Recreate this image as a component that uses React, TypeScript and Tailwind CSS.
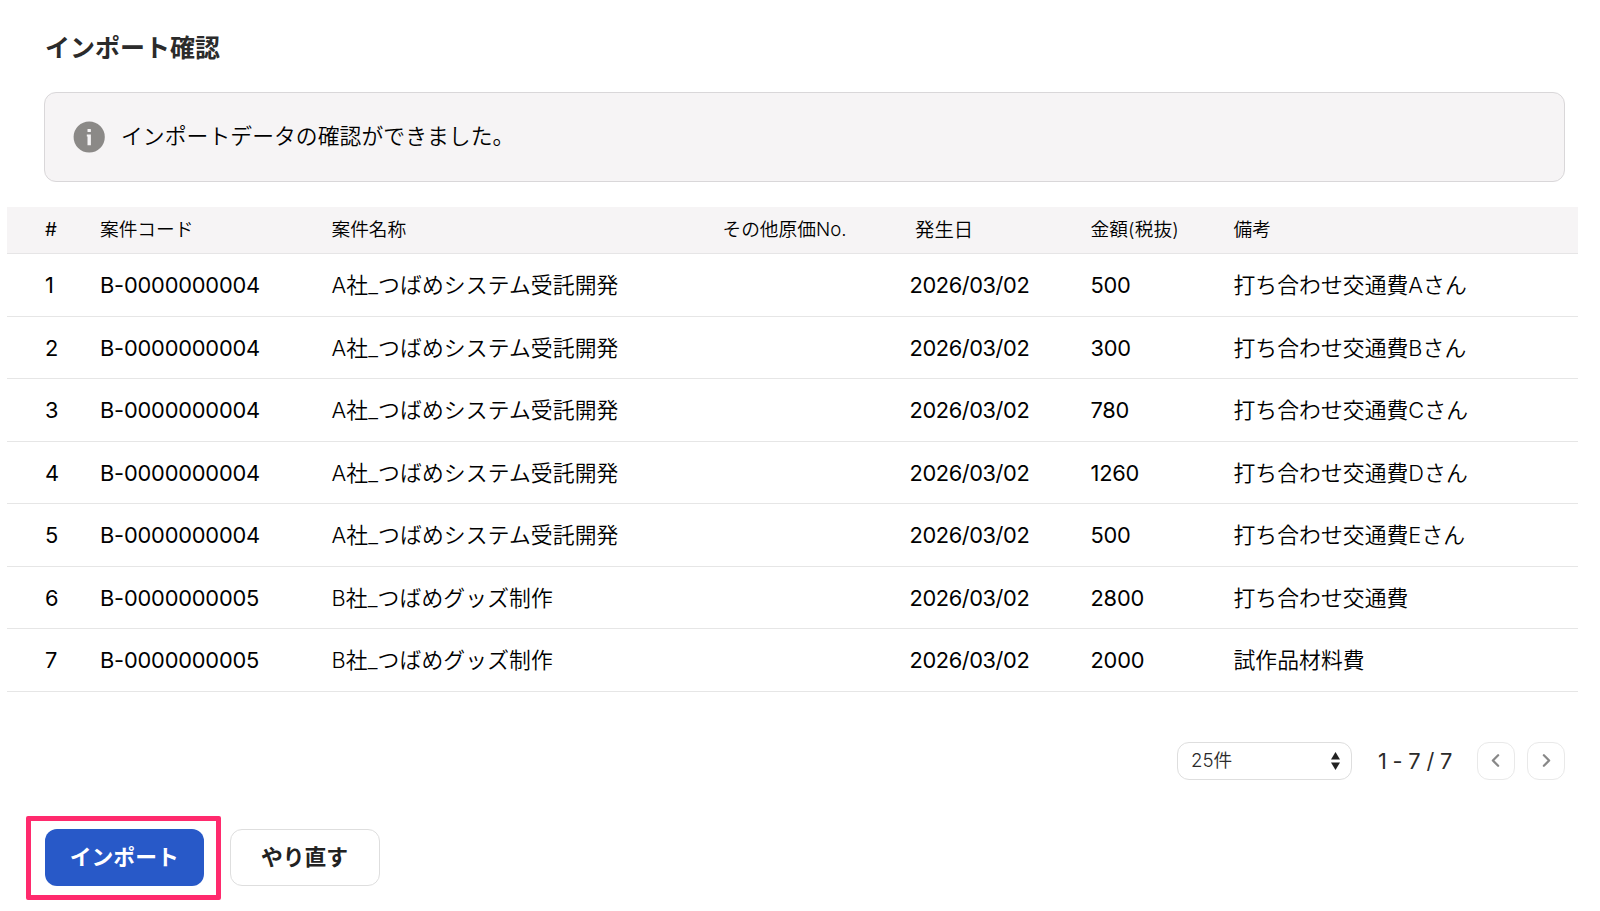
import { ChevronLeft, ChevronRight } from 'lucide-react';

type ImportRow = {
  id: number;
  code: string;
  name: string;
  otherCostNo: string;
  date: string;
  amount: string;
  note: string;
};

const rows: ImportRow[] = [
  { id: 1, code: 'B-0000000004', name: 'A社_つばめシステム受託開発', otherCostNo: '', date: '2026/03/02', amount: '500', note: '打ち合わせ交通費Aさん' },
  { id: 2, code: 'B-0000000004', name: 'A社_つばめシステム受託開発', otherCostNo: '', date: '2026/03/02', amount: '300', note: '打ち合わせ交通費Bさん' },
  { id: 3, code: 'B-0000000004', name: 'A社_つばめシステム受託開発', otherCostNo: '', date: '2026/03/02', amount: '780', note: '打ち合わせ交通費Cさん' },
  { id: 4, code: 'B-0000000004', name: 'A社_つばめシステム受託開発', otherCostNo: '', date: '2026/03/02', amount: '1260', note: '打ち合わせ交通費Dさん' },
  { id: 5, code: 'B-0000000004', name: 'A社_つばめシステム受託開発', otherCostNo: '', date: '2026/03/02', amount: '500', note: '打ち合わせ交通費Eさん' },
  { id: 6, code: 'B-0000000005', name: 'B社_つばめグッズ制作', otherCostNo: '', date: '2026/03/02', amount: '2800', note: '打ち合わせ交通費' },
  { id: 7, code: 'B-0000000005', name: 'B社_つばめグッズ制作', otherCostNo: '', date: '2026/03/02', amount: '2000', note: '試作品材料費' },
];

const columns = 'grid grid-cols-[55px_231.5px_391px_187px_181px_143px_1fr] items-center pl-[38px]';

function Alert({ message }: { message: string }) {
  return (
    <div className="mr-[35px] ml-11 flex h-[90px] items-center rounded-xl border border-[#d9d7d9] bg-[#f6f4f5] pl-7">
      <svg className="h-8 w-8 shrink-0" viewBox="0 0 32 32" aria-hidden="true">
        <circle cx="16.2" cy="16" r="15.6" fill="#8b8987" />
        <rect x="14.5" y="8" width="3.4" height="3" rx="0.6" fill="#f6f4f5" />
        <path d="M13.8 13.6h4.1v10.6h-3.4v-8.8h-0.7z" fill="#f6f4f5" />
      </svg>
      <p className="ml-4 pb-0.5 text-[21.8px] leading-8 tracking-[0.06px]">{message}</p>
    </div>
  );
}

function ImportTable() {
  return (
    <div className="mt-[25px] mr-[22px] ml-[7px]">
      <div className={`${columns} h-[47px] border-b border-[#e6e5e6] bg-[#f6f4f5] text-[18.7px] leading-none`}>
        <div className="font-normal">#</div>
        <div>案件コード</div>
        <div>案件名称</div>
        <div>その他原価No.</div>
        <div className="pt-0.5 pl-[5.5px] text-[19.4px]">発生日</div>
        <div className="tracking-[0.1px]">金額(税抜)</div>
        <div>備考</div>
      </div>
      {rows.map((row) => (
        <div
          key={row.id}
          className={`${columns} h-[62.55px] border-b border-[#e6e6e6] pt-[0.8px] text-[21.8px] leading-8`}
        >
          <div className="font-normal">{row.id}</div>
          <div className="font-normal tracking-[-0.18px]">{row.code}</div>
          <div className="tracking-[0.12px]">{row.name}</div>
          <div>{row.otherCostNo}</div>
          <div className="font-normal tracking-[-0.4px]">{row.date}</div>
          <div className="font-normal tracking-[-0.2px]">{row.amount}</div>
          <div className="tracking-[0.06px]">{row.note}</div>
        </div>
      ))}
    </div>
  );
}

function Pagination() {
  return (
    <div className="mt-[50px] mr-[35px] flex h-[38px] items-center justify-end text-[#2b2b2b]">
      <button className="flex h-[38px] w-[175px] items-center justify-between rounded-xl border border-[#dedede] pr-[11px] pl-[13px] text-[18.7px]">
        <span>25件</span>
        <svg className="h-5 w-[9px]" viewBox="0 0 9 20" fill="#222" aria-hidden="true">
          <path d="M4.5 1L9 8.5H0z" />
          <path d="M4.5 19L9 11.5H0z" />
        </svg>
      </button>
      <span className="ml-[26px] w-[99px] pt-0.5 text-[21.8px] font-normal tracking-[-0.2px]">1 - 7 / 7</span>
      <button className="flex h-[38px] w-[38px] items-center justify-center rounded-xl border border-[#e9e9e9] pr-0.5 text-[#888]">
        <ChevronLeft size={21} strokeWidth={2.6} />
      </button>
      <button className="ml-3 flex h-[38px] w-[38px] items-center justify-center rounded-xl border border-[#e9e9e9] text-[#888]">
        <ChevronRight size={21} strokeWidth={2.6} />
      </button>
    </div>
  );
}

export default function App() {
  return (
    <main className="h-[911px] overflow-hidden bg-white font-['Inter','Noto_Sans_CJK_JP',sans-serif] font-[350] text-black">
      <h1 className="mb-7 ml-[45px] pt-8 text-[25px] leading-8 font-semibold text-[#2b2b2b]">インポート確認</h1>
      <Alert message="インポートデータの確認ができました。" />
      <ImportTable />
      <Pagination />
      <div className="mt-[49px] ml-[44.5px] flex gap-[25.5px] text-[21.8px] font-semibold">
        <div className="relative">
          <button className="h-[57px] w-[159.5px] rounded-xl bg-[#2859c8] text-white">インポート</button>
          {/* Highlight frame */}
          <div className="pointer-events-none absolute -top-[13px] -right-[17px] -bottom-[14px] -left-[18.5px] rounded-[2px] border-5 border-[#ff2a6d]" />
        </div>
        <button className="h-[57px] w-[150px] rounded-xl border border-[#dedede] text-[#222]">やり直す</button>
      </div>
    </main>
  );
}
